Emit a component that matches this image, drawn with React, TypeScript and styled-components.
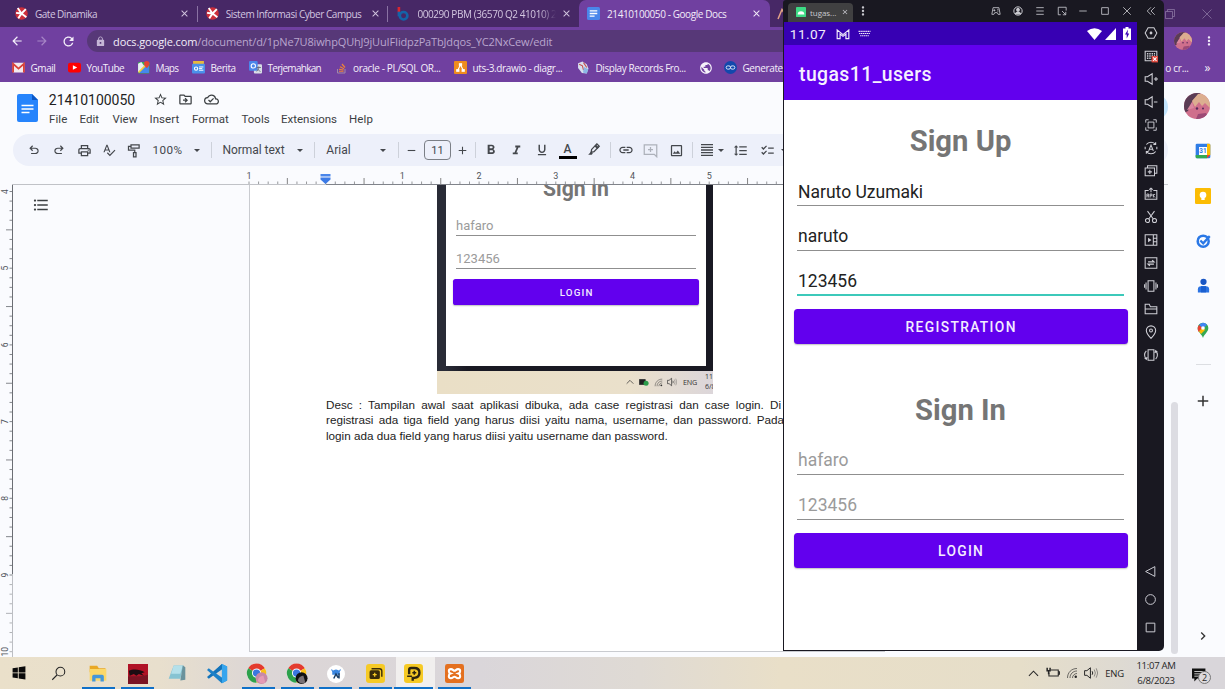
import React from 'react';
import styled, { createGlobalStyle, css } from 'styled-components';
import {
  MdOutlinePrint, MdSpellcheck, MdRemove, MdAdd, MdFormatBold, MdFormatItalic, MdFormatUnderlined,
  MdLink, MdOutlineImage, MdFormatAlignJustify, MdFormatLineSpacing, MdChecklist,
  MdStarBorder, MdOutlineDriveFileMove, MdOutlineCloudDone, MdFormatListBulleted, MdLock, MdPublic,
  MdArrowBack, MdArrowForward, MdRefresh, MdMoreVert, MdClose, MdChevronRight,
} from 'react-icons/md';

const Global = createGlobalStyle`
  * { box-sizing: border-box; }
  body { margin: 0; overflow: hidden; background: #f9fafe; }
`;

const ui = '"Open Sans", "Noto Sans", sans-serif';
const roboto = 'Roboto, "Liberation Sans", sans-serif';

const Desktop = styled.div`
  position: relative;
  display: flex;
  flex-direction: column;
  width: 1225px;
  height: 689px;
  overflow: hidden;
  font-family: ${ui};
`;

/* ---------- shared bits ---------- */

const Text = styled.span<{ $size?: number; $ls?: number; $color?: string; $weight?: number }>`
  font-size: ${p => p.$size ?? 10}px;
  letter-spacing: ${p => p.$ls ?? 0}px;
  color: ${p => p.$color ?? 'inherit'};
  font-weight: ${p => p.$weight ?? 400};
  white-space: nowrap;
`;

const Slot = styled.span<{ $w: number; $h?: number }>`
  display: flex;
  flex: none;
  align-items: center;
  justify-content: center;
  width: ${p => p.$w}px;
  ${p => p.$h && css`height: ${p.$h}px;`}
  white-space: nowrap;
  svg { flex: none; display: block; }
`;

const Spacer = styled.span`flex: 1;`;

type DrawProps = { s?: number; vb?: string; w?: number; children: React.ReactNode };
const Draw = ({ s = 14, vb = '0 0 24 24', children }: DrawProps) => (
  <svg width={s} height={s} viewBox={vb}>{children}</svg>
);
const Line = ({ s = 14, w = 1.8, vb = '0 0 24 24', children }: DrawProps) => (
  <svg width={s} height={s} viewBox={vb} fill="none" stroke="currentColor" strokeWidth={w}>{children}</svg>
);

/* ---------- browser ---------- */

const Browser = styled.main`
  display: flex;
  flex-direction: column;
  height: 657px;
  background: #fafbfe;
`;

const TabStrip = styled.div`
  display: flex;
  height: 27px;
  padding-left: 7px;
  background: #472866;
  color: #d9cde6;
`;

const TabBox = styled.div<{ $active?: boolean; $divider?: boolean }>`
  display: flex;
  flex: none;
  align-items: center;
  width: 190.7px;
  height: 27px;
  padding-left: 8px;
  position: relative;
  border-radius: 7px 7px 0 0;
  background: ${p => (p.$active ? '#7040a0' : 'transparent')};
  color: ${p => (p.$active ? '#f3edf9' : '#d3c6e0')};
  ${p => p.$divider && css`
    &::after { content: ''; position: absolute; right: 0; top: 6px; width: 1px; height: 16px; background: #8a72a3; }
  `}
`;

const TabTitle = styled.span<{ $ls: number; $fade?: boolean }>`
  flex: 1;
  margin-left: 7px;
  margin-right: -3px;
  overflow: hidden;
  font-size: 10px;
  letter-spacing: ${p => p.$ls}px;
  white-space: nowrap;
  ${p => p.$fade && css`mask-image: linear-gradient(90deg, #000 88%, transparent);`}
`;

const AddressBar = styled.div`
  display: flex;
  align-items: center;
  height: 29px;
  padding: 0 0 1px 5px;
  background: #7040a0;
  color: #f4effa;
`;

const Omnibox = styled.div`
  display: flex;
  align-items: center;
  width: 1000px;
  height: 22px;
  margin-left: 5px;
  padding-left: 7px;
  border-radius: 11px;
  background: #573878;
`;

const Bookmarks = styled.div`
  display: flex;
  align-items: center;
  height: 26px;
  padding: 0 0 3px 12px;
  background: #7040a0;
  color: #f4effa;
`;

const BookmarkItem = styled.div<{ $w: number }>`
  display: flex;
  flex: none;
  align-items: center;
  gap: 5.5px;
  width: ${p => p.$w}px;
  svg { flex: none; display: block; }
`;

/* Face used for the profile pictures */
const Avatar = ({ s }: { s: number }) => (
  <svg width={s} height={s} viewBox="0 0 26 26">
    <defs><clipPath id={`face${s}`}><circle cx="13" cy="13" r="13" /></clipPath></defs>
    <g clipPath={`url(#face${s})`}>
      <rect width="26" height="26" fill="#cf6f8c" />
      <path d="M0 0h17L9 7 4 18 0 20z" fill="#5a3c55" />
      <path d="M8 8L14 1l12-1v15l-5-5-3 3-3-4-4 5z" fill="#dcae90" />
      <path d="M3 17l5-8 2 6z" fill="#dc87a0" />
      <circle cx="13" cy="15.500" r="1.200" fill="#582a5a" /><circle cx="19" cy="15.500" r="1" fill="#582a5a" />
      <path d="M12 26l2-5 8-1 4 6z" fill="#9c4a76" />
    </g>
  </svg>
);

const Dinamika = () => (
  <Draw s={13}>
    <circle cx="12" cy="12" r="11.5" fill="#cc2f3b" />
    <path d="M12 12L5 2M12 12L2 11M12 12L6 21M12 12l8-8M12 12l9 7" stroke="#fff" strokeWidth="3.4" />
    <circle cx="12" cy="12" r="3" fill="#fff" />
  </Draw>
);
const DocsFav = () => (
  <Draw s={13}>
    <rect width="24" height="24" rx="3" fill="#4a86ea" />
    <path d="M5 7h14M5 12h14M5 17h9" stroke="#fff" strokeWidth="2.4" />
  </Draw>
);
const BlueB = () => (
  <Draw s={14}>
    <path d="M5 0v9" stroke="#d9262f" strokeWidth="4.500" />
    <path d="M5 8v8" stroke="#1464a8" strokeWidth="4.500" />
    <circle cx="13" cy="15" r="6.500" fill="none" stroke="#1464a8" strokeWidth="4.500" />
  </Draw>
);

const tabs = [
  { icon: <Dinamika />, title: 'Gate Dinamika', ls: -0.5, divider: true },
  { icon: <Dinamika />, title: 'Sistem Informasi Cyber Campus', ls: -0.45, divider: true },
  { icon: <BlueB />, title: '000290 PBM (36570 Q2 41010) 2', ls: -0.42, fade: true },
  { icon: <DocsFav />, title: '21410100050 - Google Docs', ls: -0.41, active: true },
];

const bookmarks = [
  { w: 56, label: 'Gmail', ls: -0.45, icon: (
    <Draw s={13}><rect x="1" y="3" width="22" height="18" rx="2" fill="#f3e9ee" /><path d="M2 21V5l10 9 10-9v16" fill="none" stroke="#d9433a" strokeWidth="3.4" /></Draw>) },
  { w: 69, label: 'YouTube', ls: -0.5, icon: (
    <Draw s={13}><rect y="3" width="24" height="18" rx="4" fill="#f00" /><path d="M9 8l8 4-8 4z" fill="#fff" /></Draw>) },
  { w: 55, label: 'Maps', ls: -0.6, icon: (
    <Draw s={13}><rect x="2" y="2" width="21" height="21" rx="2" fill="#3aa757" /><path d="M2 5v16L14 10 8 2z" fill="#e9eef2" /><path d="M4 22L22 3v19z" fill="#4587ee" /><path d="M3 21L20 4" stroke="#f6c945" strokeWidth="3" /><path d="M18 0a5 5 0 015 5c0 4-5 8-5 8s-5-4-5-8a5 5 0 015-5" fill="#e14334" /></Draw>) },
  { w: 57, label: 'Berita', ls: -0.45, icon: (
    <Draw s={13}><rect x="2" y="0" width="20" height="8" fill="#e8b93c" /><rect y="5" width="24" height="18" rx="2" fill="#4a90ea" /><circle cx="7.5" cy="14" r="3" fill="none" stroke="#fff" strokeWidth="2" /><path d="M13 11h8M13 14h6M13 17h8" stroke="#fff" strokeWidth="1.8" /></Draw>) },
  { w: 86.5, label: 'Terjemahkan', ls: -0.7, icon: (
    <Draw s={13}><rect x="9" y="6" width="15" height="17" rx="2" fill="#d8dde6" /><rect width="16" height="18" rx="2" fill="#4a86ea" /><circle cx="8" cy="9" r="4" fill="none" stroke="#fff" strokeWidth="2" /><path d="M14 12h8M18 10v2c0 3-2 6-4 7M15 14l6 6" stroke="#667" strokeWidth="1.6" fill="none" /></Draw>) },
  { w: 118.5, label: 'oracle - PL/SQL OR...', ls: -0.35, icon: (
    <Draw s={12}><path d="M3 14v8h15v-8" fill="none" stroke="#a08aa8" strokeWidth="2" /><path d="M6 18.500h9M6 14.500l9 1.500M8 9.500l8 4M12 4l6 7" stroke="#ef8236" strokeWidth="2.4" /></Draw>) },
  { w: 123, label: 'uts-3.drawio - diagr...', ls: -0.36, icon: (
    <Draw s={13}><rect width="24" height="24" rx="2" fill="#ee8c1e" /><path d="M12 7L7 17M12 7l5 10" stroke="#fff" strokeWidth="2" /><rect x="9" y="4" width="6" height="5" fill="#fff" /><rect x="4" y="15" width="6" height="5" fill="#fff" /><rect x="14" y="15" width="6" height="5" fill="#fff" /></Draw>) },
  { w: 122, label: 'Display Records Fro...', ls: -0.43, icon: (
    <Draw s={13}><path d="M2 4l8-3 8 5 3 8-3 9-9-1-7-9z" fill="#d7dfee" /><path d="M4 6l6 3 2 8M12 3l6 9" stroke="#c2504e" strokeWidth="2" fill="none" /><path d="M13 11l8 4-3 8-7-2z" fill="#8bb7e6" /></Draw>) },
  { w: 25, label: '', ls: 0, icon: <MdPublic size={14} color="#f6f2fa" /> },
  { w: 80, label: 'Generate', ls: -0.4, icon: (
    <Draw s={13}><circle cx="12" cy="12" r="12" fill="#1248ac" /><rect x="4" y="9" width="8" height="6" rx="3" fill="none" stroke="#dce6fa" strokeWidth="1.8" /><rect x="12" y="9" width="8" height="6" rx="3" fill="none" stroke="#dce6fa" strokeWidth="1.8" /></Draw>) },
];

/* ---------- document editor ---------- */

const DocHeader = styled.header`
  display: flex;
  height: 52px;
  padding-left: 17px;
  background: #fafbfe;
  font-family: ${roboto};
  color: #3c4043;
`;
const DocLogo = styled.div`width: 32px; padding-top: 12px; svg { display: block; }`;
const DocTitles = styled.div`display: flex; flex-direction: column; flex: 1;`;
const TitleRow = styled.div`display: flex; align-items: center; height: 25px; padding-top: 10px;`;
const MenuRow = styled.nav`display: flex; align-items: center; height: 22px; padding-top: 1px;`;
const MenuItem = styled.span<{ $w: number; $ls: number }>`
  flex: none;
  width: ${p => p.$w}px;
  font-size: 11.5px;
  letter-spacing: ${p => p.$ls}px;
  white-space: nowrap;
`;
const ShareEdge = styled.div`
  width: 40px; height: 26px; margin-top: 12px; margin-right: 16px; border-radius: 13px; background: #c2e4fd;
`;
const HeaderAvatar = styled.div`width: 41px; padding-top: 11px;`;

const DocBody = styled.div`display: flex; height: 523px;`;
const DocMain = styled.div`display: flex; flex-direction: column; width: 1180px;`;

const Toolbar = styled.div`
  display: flex;
  align-items: center;
  width: 1155px;
  height: 32px;
  margin-left: 13px;
  padding-left: 8px;
  border-radius: 16px;
  background: #edf0fa;
  font-family: ${roboto};
  color: #44474c;
`;
const Divider = styled.i`width: 1px; height: 16px; background: #cdd1da;`;
const Caret = styled.i`
  border: 3.5px solid transparent;
  border-top-color: #44474c;
  border-bottom: 0;
`;
const SizeBox = styled.span`
  display: flex;
  flex: none;
  align-items: center;
  justify-content: center;
  width: 27px;
  height: 20px;
  margin: 0 2px 0 7px;
  border: 1px solid #7b7f86;
  border-radius: 4px;
  font-size: 11px;
`;
const ColorLetter = styled.span`
  display: flex;
  flex-direction: column;
  align-items: center;
  width: 18px;
  border-bottom: 3px solid #000;
  font-size: 12px;
  font-weight: 500;
  line-height: 14px;
`;

const RulerRow = styled.div`height: 19px; svg { display: block; }`;
const Workspace = styled.div`display: flex; height: 472px;`;
const SideRuler = styled.div`width: 13px; svg { display: block; }`;
const Outline = styled.div`width: 236px; padding: 11px 0 0 19px; color: #3c4043; svg { display: block; }`;
const Page = styled.article`
  width: 636px;
  height: 467px;
  border: 1px solid #c9cbd0;
  border-top: 0;
  background: #fff;
`;
const ScrollTrack = styled.div`
  flex: 1;
  display: flex;
  justify-content: flex-end;
  padding: 217px 2px 0 0;
`;
const Thumb = styled.div`width: 7px; height: 252px; border-radius: 4px; background: #dcdce2;`;

const Paragraph = styled.div`
  margin: 3px 0 0 76px;
  font-family: "Liberation Sans", Arial, sans-serif;
  font-size: 11.7px;
  line-height: 15.4px;
  color: #1c1c1c;
`;
const JustLine = styled.div<{ $w: number; $last?: boolean }>`
  width: ${p => p.$w}px;
  white-space: nowrap;
  text-align: justify;
  text-align-last: ${p => (p.$last ? 'left' : 'justify')};
`;

const SidePanel = styled.aside`
  display: flex;
  flex-direction: column;
  align-items: center;
  width: 45px;
  margin-top: -5px;
  padding-left: 1px;
  color: #333;
`;
const PanelRule = styled.i`width: 15px; height: 1px; margin: 12px 0 13px; background: #dcdee2;`;

/* Screenshot inserted in the page */
const Shot = styled.figure`
  display: flex;
  flex-direction: column;
  width: 276px;
  height: 209px;
  margin: 0 0 0 187px;
  overflow: hidden;
`;
const ShotPhone = styled.div`
  display: flex;
  flex-direction: column;
  height: 185.5px;
  padding: 0 7px 5px 9px;
  background: linear-gradient(90deg, #292b36 9px, #191923 30px);
`;
const ShotScreen = styled.div`
  display: flex;
  flex-direction: column;
  align-items: center;
  height: 180.5px;
  background: #fff;
  font-family: ${roboto};
`;
const ShotBar = styled.div`
  display: flex;
  align-items: center;
  flex: 1;
  background: linear-gradient(90deg, #eadfc6, #eae0cb 70%, #dcd6da);
  color: #333;
`;
const ShotClock = styled.div`
  width: 8px; overflow: hidden; font-size: 7px; line-height: 10.500px; white-space: nowrap;
`;

const undoPath = 'M280-200v-80h284q63 0 109.500-40T720-420q0-60-46.500-100T564-560H312l104 104-56 56-200-200 200-200 56 56-104 104h252q97 0 166.500 63T800-420q0 94-69.500 157T564-200H280Z';

const INCH = 76.7;

const TopRuler = () => {
  const ticks = [];
  for (let i = -8; i <= 64; i++) {
    const x = 325.7 + (i * INCH) / 8;
    const half = i % 4 === 0 && i % 8 !== 0;
    ticks.push(<path key={i} d={`M${x} ${half ? 12 : 15.500}V18`} stroke={half ? '#777' : '#8b8d91'} strokeWidth="0.9" />);
  }
  return (
    <svg width="1180" height="19">
      <path d="M12 18.500H326" stroke="#c0c2c7" />
      <path d="M326 18.500H803" stroke="#80838a" />
      <path d="M803 18.500H1168" stroke="#c8cacf" />
      {ticks}
      {[-1, 1, 2, 3, 4, 5].map(n => (
        <text key={n} x={325.7 + n * INCH} y={13} textAnchor="middle" fontSize="9" fontFamily="Roboto" fill="#50545a">{Math.abs(n)}</text>
      ))}
      <path d="M320.500 8h10v2.500h-10z" fill="#4a86ea" />
      <path d="M320.500 11.500h10v2l-5 4.500-5-4.500z" fill="#3c7be6" />
    </svg>
  );
};

const LeftRuler = () => {
  const ticks = [];
  for (let i = 0; i <= 48; i++) {
    const y = 6.5 + (i * INCH) / 8;
    const half = i % 8 === 4;
    ticks.push(<path key={i} d={`M${half ? 6 : 9.500} ${y}H12`} stroke={y > 390 ? '#a8aaae' : '#777a80'} strokeWidth="0.9" />);
  }
  return (
    <svg width="13" height="472">
      <path d="M12.500 0V389" stroke="#6b6e74" />
      <path d="M12.500 389V472" stroke="#bcbec3" />
      {ticks}
      {[4, 5, 6, 7, 8, 9, 10].map(n => {
        const y = 6.5 + (n - 4) * INCH;
        return (
          <text key={n} transform={`translate(7.500 ${y}) rotate(-90)`} textAnchor="middle" fontSize="8.500" fontFamily="Roboto" fill="#50545a">{n}</text>
        );
      })}
    </svg>
  );
};

/* ---------- form shared by the phone screens ---------- */

const FormTitle = styled.h2<{ $size: number; $top: number; $h: number }>`
  display: flex;
  flex: none;
  align-items: center;
  justify-content: center;
  height: ${p => p.$h}px;
  margin: ${p => p.$top}px 0 0;
  font-size: ${p => p.$size}px;
  font-weight: 700;
  color: #757575;
`;
const Field = styled.div<{ $w: number; $h: number; $size: number; $pad: number; $hint?: boolean; $focus?: boolean }>`
  display: flex;
  flex: none;
  align-items: flex-end;
  width: ${p => p.$w}px;
  height: ${p => p.$h}px;
  padding: 0 0 ${p => p.$pad}px ${p => (p.$size > 15 ? 1 : 0)}px;
  border-bottom: ${p => (p.$focus ? '2px solid #3cc9ba' : '1px solid #8f8f8f')};
  font-size: ${p => p.$size}px;
  line-height: ${p => p.$size * 1.16}px;
  color: ${p => (p.$hint ? '#9b9b9b' : '#222')};
`;
const FormButton = styled.button<{ $w: number; $h: number; $top: number; $size: number; $ls: number }>`
  flex: none;
  width: ${p => p.$w}px;
  height: ${p => p.$h}px;
  margin: ${p => p.$top}px 0 0;
  padding: 0 0 0 ${p => p.$ls}px;
  border: 0;
  border-radius: ${p => p.$h / 10}px;
  background: #6200ee;
  box-shadow: 0 1px 1.500px rgba(0, 0, 0, 0.25);
  color: #f4ecff;
  font: 500 ${p => p.$size}px ${roboto};
  letter-spacing: ${p => p.$ls}px;
`;

/* ---------- emulator window ---------- */

const Emulator = styled.section`
  position: absolute;
  left: 783px;
  top: 0;
  display: flex;
  flex-direction: column;
  width: 381px;
  height: 651px;
  overflow: hidden;
  border-radius: 3px 5px 5px 0;
  background: #191821;
`;
const TitleBar = styled.div`
  display: flex;
  align-items: center;
  height: 22px;
  padding-left: 5px;
  color: #c9c9cf;
`;
const AppTab = styled.div`
  display: flex;
  align-items: center;
  gap: 4px;
  width: 65px;
  height: 19px;
  margin-top: 2px;
  padding-left: 8px;
  border-radius: 4px 4px 0 0;
  background: #404041;
`;
const EmuRow = styled.div`display: flex; height: 628px; padding-left: 1px;`;
const Phone = styled.div`
  display: flex;
  flex-direction: column;
  width: 353px;
  background: #fff;
  font-family: ${roboto};
`;
const StatusBar = styled.div`
  display: flex;
  align-items: center;
  height: 23px;
  padding-left: 6px;
  background: #3700b3;
  color: #f1ebfb;
`;
const AppBar = styled.div`
  display: flex;
  align-items: center;
  height: 55px;
  padding: 3px 0 0 15px;
  background: #6200ee;
  color: #f6f0ff;
`;
const Form = styled.div`display: flex; flex-direction: column; align-items: center;`;
const Controls = styled.div`
  display: flex;
  flex-direction: column;
  align-items: center;
  width: 27px;
  margin-top: -1px;
  color: #cfcfd6;
`;

const controlIcons: React.ReactNode[] = [
  <Line><path d="M7 3h10l5 9-5 9H7l-5-9z" /><circle cx="12" cy="12" r="1.500" fill="currentColor" /></Line>,
  <Line><path d="M2 4h20v16H2z" /><path d="M5 8h14M5 12h14M5 16h7" strokeDasharray="2.500 1.500" strokeWidth="2.500" /><rect x="13" y="12" width="11" height="11" fill="#e04a3e" stroke="none" /><path d="M15.500 14.500l6 6M21.500 14.500l-6 6" stroke="#fff" /></Line>,
  <Line><path d="M2 8h4l8-5v18l-8-5H2zM17 12h7M20.500 8.500v7" /></Line>,
  <Line><path d="M2 8h4l8-5v18l-8-5H2zM17 12h6" /></Line>,
  <Line w={1.6}><path d="M3 8V3h5M16 3h5v5M21 16v5h-5M8 21H3v-5M7 7h10v10H7z" /></Line>,
  <Line><path d="M4 6a10 10 0 0116 0M20 18a10 10 0 01-16 0M20 2v4h-4M4 22v-4h4M2 10v4M22 10v4" /><path d="M8 17l4-10 4 10M9.500 14h5" /></Line>,
  <Line><path d="M6 7V3h16v13h-4M2 7h16v13H2zM10 10v7M6.500 13.500h7" /></Line>,
  <Line><path d="M8 6H2v15h20V6h-6M12 9V2M9 4.500L12 2l3 2.500" /><path d="M5 18v-6h3v6M5 15h3M10.500 18v-6h3v3h-3M16 12v6M19 12l-3 3 3 3" strokeWidth="1.500" /></Line>,
  <Line><circle cx="6" cy="18" r="3.500" /><circle cx="18" cy="18" r="3.500" /><path d="M8 15.500L18 2M16 15.500L6 2" /></Line>,
  <Line><path d="M2 3h20v18H2zM16 3v18M16 9h6M16 15h6" /><path d="M7 8v8l6-4z" fill="currentColor" stroke="none" /></Line>,
  <Line><path d="M2 3h20v18H2z" /><path d="M7 10h10l-3-3M17 14H7l3 3" strokeWidth="2.200" /></Line>,
  <Line><path d="M7 3h10v18H7zM3.500 6v12M20.500 6v12M1 9v6M23 9v6" /></Line>,
  <Line><path d="M2 20V4h7l2 4h11v12zM2 12h20" /></Line>,
  <Line><path d="M12 23S4 15 4 9.500a8 8 0 0116 0C20 15 12 23 12 23z" /><circle cx="12" cy="9.500" r="2.500" /></Line>,
  <Line><path d="M7 3h10v18H7zM4 5c-4 4-4 10 0 14M20 5c4 4 4 10 0 14M1 17l3 2.500 1-4M23 7l-3-2.500-1 4" /></Line>,
];

/* ---------- taskbar ---------- */

const Taskbar = styled.footer`
  display: flex;
  height: 32px;
  background: linear-gradient(90deg, #eae0ca 0, #e8dfcd 160px, #dcd6d6 260px, #dad6da 480px, #dfdad4 640px, #e9dfc8 780px, #e6dec9 1020px, #dedad2 1120px, #d9d6da 1180px);
  color: #262626;
`;
const TaskItem = styled.div<{ $w: number; $run?: boolean; $active?: boolean }>`
  display: flex;
  flex: none;
  align-items: center;
  justify-content: center;
  width: ${p => p.$w}px;
  height: 32px;
  padding-top: ${p => (p.$run ? 1 : 0)}px;
  background: ${p => (p.$active ? '#f1efee' : 'transparent')};
  ${p => p.$run && css`
    &::after {
      content: '';
      align-self: flex-end;
      width: ${p.$active ? 39 : 33}px;
      height: 2px;
      margin-left: -${p.$active ? 29.5 : 26.500}px;
      margin-right: -6.5px;
      background: #0f70c8;
    }
  `}
  svg { flex: none; display: block; }
`;
const Clock = styled.div`
  width: 60px;
  margin-left: -3px;
  font-size: 9.6px;
  letter-spacing: -0.3px;
  line-height: 14.500px;
  padding-top: 2px;
  text-align: center;
`;

const Chrome = ({ face, hair }: { face: string; hair: string }) => (
  <Draw s={22}>
    <circle cx="11.500" cy="11" r="10.500" fill="#fff" />
    <path d="M11.500 11L2.400 5.750A10.500 10.500 0 0120.600 5.750z" fill="#e33b2e" />
    <path d="M11.500 11L20.600 5.750A10.500 10.500 0 0111.500 21.500z" fill="#fbc116" />
    <path d="M11.500 11V21.500A10.500 10.500 0 012.400 5.750z" fill="#2da14c" />
    <circle cx="11.500" cy="11" r="5" fill="#fff" /><circle cx="11.500" cy="11" r="4" fill="#3b78e0" />
    <circle cx="17" cy="16.500" r="6.500" fill={hair} />
    <path d="M13 19c1-4 4-5 6-5l2 7c-2 2-6 2-8-2z" fill={face} />
  </Draw>
);

const taskItems: { w: number; run?: boolean; active?: boolean; icon: React.ReactNode }[] = [
  { w: 38, icon: <Draw s={14}><path d="M1 4l9-1.500V11H1zM11.500 2.200L23 .5V11H11.500zM1 12.500h9V21l-9-1.300zM11.500 12.500H23V23l-11.500-1.700z" fill="#0a0a0a" /></Draw> },
  { w: 40, icon: <Line s={15} w={1.7}><circle cx="15" cy="9" r="7" /><path d="M10 14l-8 8" /></Line> },
  { w: 40, run: true, icon: <Draw s={20}><path d="M2 2h9l2 3h8v5H2z" fill="#e9a825" /><path d="M2 6h20v14H2z" fill="#fbd869" /><path d="M5 21v-6q0-2 2-2h10q2 0 2 2v6h-4v-4H9v4z" fill="#4597d8" /></Draw> },
  { w: 39.5, run: true, icon: <Draw s={20}><rect width="24" height="24" fill="#b01226" /><path d="M0 15c8-1 14 1 24-2v11H0z" fill="#7a1424" /><path d="M1 8c5-2 13-2 19 2l-4 1 3 3-6-2-3 2-3-2-5 2z" fill="#1c0c12" /></Draw> },
  { w: 39.5, icon: <Draw s={20}><path d="M8 3h12l-4 16H2z" fill="#86c3d2" /><path d="M8 3h11l-3 10H5z" fill="#b4e0ea" /><path d="M19 3l3 2v15l-6 1z" fill="#6a929c" /></Draw> },
  { w: 40, icon: <Draw s={21}><path d="M17 1l6 3v16l-6 3L6 12.500z" fill="#2489ca" /><path d="M17 1v22l6-3V4z" fill="#36a5ee" /><path d="M17 7L2 18l-2-2L17 1z" fill="#1373ba" /><path d="M17 17L2 6 0 8l17 15z" fill="#1c80c8" /><path d="M17 7.500v9L10.500 12z" fill="#dcd8d4" /></Draw> },
  { w: 40, run: true, icon: <Chrome face="#e49ab5" hair="#c889a8" /> },
  { w: 39.5, run: true, icon: <Chrome face="#777074" hair="#101012" /> },
  { w: 39.5, run: true, icon: <Draw s={18}><circle cx="12" cy="12" r="12" fill="#fff" /><path d="M7 8q5-4 10 0v5H7z" fill="#3a86e0" /><path d="M8 9l-2-3M16 9l2-3" stroke="#3a86e0" strokeWidth="1.500" /><path d="M9 18l3-6 3 5M16 11v7" stroke="#173d66" strokeWidth="2" fill="none" /></Draw> },
  { w: 39.5, run: true, icon: <Draw s={19}><rect width="24" height="24" rx="4" fill="#f6ca25" /><rect x="4.500" y="8" width="13" height="11" rx="2" fill="#3a2c08" /><path d="M7 6h10q3 0 3 3v7" stroke="#3a2c08" strokeWidth="1.800" fill="none" /><path d="M11 11v5M8.500 13.500h5" stroke="#f6ca25" strokeWidth="1.600" /></Draw> },
  { w: 39.5, run: true, active: true, icon: <Draw s={19}><rect width="24" height="24" rx="4" fill="#f6ca25" /><path d="M6.500 13V7.500Q6.500 5 9 5h4q6.500 0 6.500 6T13 17.500h-2V21" stroke="#2c2410" strokeWidth="3" fill="none" /><path d="M13 8.500v5M10.500 11h5M4 15.500h6" stroke="#2c2410" strokeWidth="2" /></Draw> },
  { w: 39.5, run: true, icon: <Draw s={19}><rect width="24" height="24" rx="3" fill="#e4701f" /><path d="M7.500 6.500C4 6.500 4 11 7 12c-3 1-3 6 .5 6 2.500 0 3-2 4.500-2s2 2 4.500 2c3.500 0 3.500-5 .5-6 3-1 3-5.500-.5-5.500-2.500 0-3 2-4.500 2s-2-2-4.500-2z" fill="none" stroke="#fff" strokeWidth="2.600" /></Draw> },
];

const Wifi = ({ s = 12 }: { s?: number }) => (
  <Line s={s} w={1.6}><path d="M3 22C3 11 11 3 22 3M8 22c0-8 6-14 14-14M13 22c0-5 4-9 9-9" opacity=".8" /><circle cx="19.500" cy="19.500" r="2.500" fill="currentColor" stroke="none" /></Line>
);
const Volume = ({ s = 13 }: { s?: number }) => (
  <Line s={s} w={1.7}><path d="M1 8h4l6-5v18l-6-5H1z" /><path d="M14 9q2 3 0 6" /><path d="M17.500 6q4 6 0 12M21 4q5 8 0 16" opacity=".45" /></Line>
);
const Up = ({ s = 11 }: { s?: number }) => <Line s={s} w={2.2}><path d="M2 17L12 7l10 10" /></Line>;

const Badge = styled.span`
  position: absolute;
  left: 6px;
  top: 6px;
  width: 13px;
  height: 13px;
  border: 1px solid #777;
  border-radius: 50%;
  background: #dcd9dc;
  font-size: 9px;
  line-height: 11px;
  text-align: center;
`;
const Notice = styled.div`position: relative; width: 20px; height: 18px; margin: 8px 0 0 6px;`;

export default function App() {
  return (
    <Desktop>
      <Global />
      <Browser>
        <TabStrip>
          {tabs.map(t => (
            <TabBox key={t.title} $active={t.active} $divider={t.divider}>
              {t.icon}
              <TabTitle $ls={t.ls} $fade={t.fade}>{t.title}</TabTitle>
              <Slot $w={26}><MdClose size={11} /></Slot>
            </TabBox>
          ))}
          <Slot $w={24}><Line s={12} w={3}><path d="M4 22L12 3l5 8" stroke="#e2a287" /></Line></Slot>
          <Spacer />
          <Slot $w={36}><Line s={12} w={1.5}><path d="M3 7h14v14H3zM7 7V3h14v14h-4" stroke="#8e7aa5" /></Line></Slot>
          <Slot $w={37}><Line s={12} w={1.5}><path d="M3 3l18 18M21 3L3 21" stroke="#8e7aa5" /></Line></Slot>
        </TabStrip>

        <AddressBar>
          <Slot $w={24}><MdArrowBack size={14} /></Slot>
          <Slot $w={26}><MdArrowForward size={14} color="#a685c6" /></Slot>
          <Slot $w={27}><MdRefresh size={15} /></Slot>
          <Omnibox>
            <Slot $w={13}><MdLock size={11} color="#c5b6d6" /></Slot>
            <Slot $w={6} />
            <Text $size={11} $ls={-0.1} $color="#f3eefa">docs.google.com</Text>
            <Text $size={11} $ls={-0.16} $color="#b9a6ce">/document/d/1pNe7U8iwhpQUhJ9jUuIFIidpzPaTbJdqos_YC2NxCew/edit</Text>
          </Omnibox>
          <Spacer />
          <Slot $w={18}><Avatar s={18} /></Slot>
          <Slot $w={33}><MdMoreVert size={14} /></Slot>
        </AddressBar>

        <Bookmarks>
          {bookmarks.map(b => (
            <BookmarkItem key={b.label} $w={b.w}>
              {b.icon}
              <Text $ls={b.ls}>{b.label}</Text>
            </BookmarkItem>
          ))}
          <Spacer />
          <Slot $w={26}><Text $ls={-0.3}>o cr...</Text></Slot>
          <Slot $w={35}><Text $size={12}>»</Text></Slot>
        </Bookmarks>

        <DocHeader>
          <DocLogo>
            <svg width="21" height="28" viewBox="0 0 21 28">
              <path d="M2 0h13l6 6v20a2 2 0 01-2 2H2a2 2 0 01-2-2V2a2 2 0 012-2z" fill="#2684fc" />
              <path d="M15 0l6 6h-6z" fill="#0b58c7" />
              <path d="M4.500 11.500h12M4.500 15h12M4.500 18.500h8" stroke="#fff" strokeWidth="1.500" />
            </svg>
          </DocLogo>
          <DocTitles>
            <TitleRow>
              <Slot $w={86}><Text $size={14} $ls={-0.02} $color="#1f1f1f">21410100050</Text></Slot>
              <Slot $w={50}><MdStarBorder size={15} /></Slot>
              <Slot $w={1}><MdOutlineDriveFileMove size={15} /></Slot>
              <Slot $w={50}><MdOutlineCloudDone size={15} /></Slot>
            </TitleRow>
            <MenuRow>
              <MenuItem $w={30.5} $ls={0.1}>File</MenuItem>
              <MenuItem $w={33} $ls={0.05}>Edit</MenuItem>
              <MenuItem $w={37} $ls={0}>View</MenuItem>
              <MenuItem $w={42.5} $ls={0.05}>Insert</MenuItem>
              <MenuItem $w={49.5} $ls={0}>Format</MenuItem>
              <MenuItem $w={39.5} $ls={0}>Tools</MenuItem>
              <MenuItem $w={68} $ls={0}>Extensions</MenuItem>
              <MenuItem $w={30} $ls={0.1}>Help</MenuItem>
            </MenuRow>
          </DocTitles>
          <ShareEdge />
          <HeaderAvatar><Avatar s={26} /></HeaderAvatar>
        </DocHeader>

        <DocBody>
          <DocMain>
            <Toolbar>
              <Slot $w={25}><Draw s={14} vb="0 -960 960 960"><path d={undoPath} fill="#44474c" /></Draw></Slot>
              <Slot $w={25}><Draw s={14} vb="0 -960 960 960"><path d={undoPath} fill="#44474c" transform="matrix(-1 0 0 1 960 0)" /></Draw></Slot>
              <Slot $w={26}><MdOutlinePrint size={15} /></Slot>
              <Slot $w={24}><MdSpellcheck size={14} /></Slot>
              <Slot $w={25}><Line s={15} w={2}><path d="M8 3h13v5H8zM8 5.500H4v6h10v4M12 15.500h4V22h-4z" /></Line></Slot>
              <Slot $w={43}><Text $size={11.7} $ls={0.4}>100%</Text></Slot>
              <Slot $w={16}><Caret /></Slot>
              <Slot $w={12}><Divider /></Slot>
              <Slot $w={73}><Text $size={12} $ls={-0.05}>Normal text</Text></Slot>
              <Slot $w={20}><Caret /></Slot>
              <Slot $w={9}><Divider /></Slot>
              <Slot $w={39}><Text $size={12} $ls={0}>Arial</Text></Slot>
              <Slot $w={16} />
              <Slot $w={18}><Caret /></Slot>
              <Slot $w={13}><Divider /></Slot>
              <Slot $w={12}><MdRemove size={13} /></Slot>
              <SizeBox>11</SizeBox>
              <Slot $w={18}><MdAdd size={13} /></Slot>
              <Slot $w={9}><Divider /></Slot>
              <Slot $w={22}><MdFormatBold size={16} /></Slot>
              <Slot $w={28}><MdFormatItalic size={15} /></Slot>
              <Slot $w={23}><MdFormatUnderlined size={14} /></Slot>
              <Slot $w={29}><ColorLetter>A</ColorLetter></Slot>
              <Slot $w={24}><Line s={14} w={2.2}><path d="M8 11L17 1.500l4 4L12 15l-5 1z" /><path d="M14 4l5 5" strokeWidth="4" /><path d="M2 20l5-5 3 3-2 2z" fill="currentColor" stroke="none" /></Line></Slot>
              <Slot $w={9}><Divider /></Slot>
              <Slot $w={22}><MdLink size={16} /></Slot>
              <Slot $w={27}><Line s={15} w={2}><path d="M2 3h20v19l-4-4H2zM12 6.500v8M8 10.500h8" stroke="#adb1ba" /></Line></Slot>
              <Slot $w={25}><MdOutlineImage size={15} /></Slot>
              <Slot $w={7}><Divider /></Slot>
              <Slot $w={22}><MdFormatAlignJustify size={16} /></Slot>
              <Slot $w={5}><Caret /></Slot>
              <Slot $w={35}><MdFormatLineSpacing size={15} /></Slot>
              <Slot $w={18}><MdChecklist size={15} /></Slot>
              <Slot $w={16}><Caret /></Slot>
            </Toolbar>
            <RulerRow><TopRuler /></RulerRow>
            <Workspace>
              <SideRuler><LeftRuler /></SideRuler>
              <Outline><MdFormatListBulleted size={18} /></Outline>
              <Page>
                <Shot>
                  <ShotPhone>
                    <ShotScreen>
                      <FormTitle $size={21.2} $top={-6} $h={19}>Sign In</FormTitle>
                      <Field $w={240} $h={38} $size={13} $pad={1.5} $hint>hafaro</Field>
                      <Field $w={240} $h={33} $size={13} $pad={1.5} $hint>123456</Field>
                      <FormButton as="div" $w={246} $h={26} $top={10} $size={9.8} $ls={1.15}>
                        <Slot $w={245} $h={26}>LOGIN</Slot>
                      </FormButton>
                    </ShotScreen>
                  </ShotPhone>
                  <ShotBar>
                    <Spacer />
                    <Slot $w={15}><Up s={8} /></Slot>
                    <Slot $w={14}><Line s={10} w={2}><path d="M1 6h14v12H1z" fill="#222" /><circle cx="17" cy="15" r="6" fill="#2b9c4a" stroke="none" /></Line></Slot>
                    <Slot $w={14}><Wifi s={9} /></Slot>
                    <Slot $w={14}><Volume s={10} /></Slot>
                    <Slot $w={22}><Text $size={7.2} $ls={-0.2}>ENG</Text></Slot>
                    <Slot $w={4} />
                    <ShotClock>11:07<br />6/8</ShotClock>
                  </ShotBar>
                </Shot>
                <Paragraph>
                  <JustLine $w={455}>Desc : Tampilan awal saat aplikasi dibuka, ada case registrasi dan case login. Di</JustLine>
                  <JustLine $w={458}>registrasi ada tiga field yang harus diisi yaitu nama, username, dan password. Pada</JustLine>
                  <JustLine $w={458} $last>login ada dua field yang harus diisi yaitu username dan password.</JustLine>
                </Paragraph>
              </Page>
              <ScrollTrack><Thumb /></ScrollTrack>
            </Workspace>
          </DocMain>

          <SidePanel>
            <Slot $w={30} $h={44.7}>
              <Draw s={16}><rect x="1" y="1" width="22" height="22" rx="2" fill="#2f7de6" /><path d="M18 1h3a2 2 0 012 2v15h-5z" fill="#fbbc04" /><path d="M1 18h17v5H3a2 2 0 01-2-2z" fill="#34a853" /><path d="M18 18h5l-5 5z" fill="#ea4335" /><rect x="6" y="6" width="12" height="12" fill="#fff" /><text x="12" y="15.500" fontSize="9.500" fontWeight="700" fontFamily="Roboto" textAnchor="middle" fill="#2f7de6">31</text></Draw>
            </Slot>
            <Slot $w={30} $h={44.7}>
              <Draw s={16}><rect x="0" y="0" width="24" height="24" rx="2" fill="#fbbc04" /><circle cx="12" cy="10.500" r="5" fill="#fff" /><path d="M9.500 14h5v4h-5z" fill="#fff" /></Draw>
            </Slot>
            <Slot $w={30} $h={44.7}>
              <Draw s={15}><circle cx="11.500" cy="13" r="8.800" fill="none" stroke="#2a78e6" strokeWidth="4" /><path d="M7 12l4.500 4.500L22 5" fill="none" stroke="#2a78e6" strokeWidth="3.600" /></Draw>
            </Slot>
            <Slot $w={30} $h={44.7}>
              <Draw s={15}><circle cx="12" cy="6" r="5" fill="#1a57c4" /><path d="M3 23v-5q0-5 5-5h8q5 0 5 5v5z" fill="#2b73e2" /><path d="M8 13h8v10H8z" fill="#1a5fd0" /></Draw>
            </Slot>
            <Slot $w={30} $h={44.7}>
              <Draw s={16}><path d="M12 1a8 8 0 018 8c0 6-6 9-8 15C10 18 4 15 4 9a8 8 0 018-8" fill="#34a853" /><path d="M12 1a8 8 0 016 3l-6 6-6-5.500A8 8 0 0112 1" fill="#4285f4" /><path d="M6 4.500L11 9l-5.500 6A9 9 0 014 9a8 8 0 012-4.500" fill="#ea4335" /><path d="M6 14l6-6 3 4-6 6z" fill="#fbbc04" /><circle cx="12" cy="9" r="2.700" fill="#fff" /></Draw>
            </Slot>
            <PanelRule />
            <Slot $w={30} $h={44.7}><MdAdd size={18} /></Slot>
            <Spacer />
            <Slot $w={30} $h={42}><MdChevronRight size={16} /></Slot>
          </SidePanel>
        </DocBody>
      </Browser>

      <Taskbar>
        {taskItems.map((t, i) => (
          <TaskItem key={i} $w={t.w} $run={t.run} $active={t.active}>{t.icon}</TaskItem>
        ))}
        <Spacer />
        <Slot $w={19}><Up /></Slot>
        <Slot $w={19}><Line s={14} w={1.8}><path d="M8 7h13v10H5v-6M21 10h2v4h-2" /><path d="M2 3v5h5V3M4.500 8v6" strokeWidth="2.600" /></Line></Slot>
        <Slot $w={19}><Wifi /></Slot>
        <Slot $w={19}><Volume s={14} /></Slot>
        <Slot $w={29}><Text $size={9.5} $ls={-0.2}>ENG</Text></Slot>
        <Clock>11:07 AM<br />6/8/2023</Clock>
        <Notice>
          <svg width="14" height="14" viewBox="0 0 24 24"><path d="M0 1h23v17H9l-5 5v-5H0z" fill="#111" /><path d="M4 6h15M4 10h15M4 14h9" stroke="#ddd" strokeWidth="1.500" /></svg>
          <Badge>2</Badge>
        </Notice>
        <Slot $w={13} />
      </Taskbar>

      <Emulator>
        <TitleBar>
          <AppTab>
            <Draw s={10}><rect width="24" height="24" rx="2" fill="#3ddb85" /><path d="M4 18a8 8 0 0116 0z" fill="#fff" /></Draw>
            <Text $size={8} $ls={-0.05}>tugas...</Text>
            <Slot $w={9}><MdClose size={8} /></Slot>
          </AppTab>
          <Slot $w={20}><MdMoreVert size={14} /></Slot>
          <Spacer />
          <Slot $w={23}><Line s={10} w={2}><path d="M5 4h14l3 16h-5l-2-4H9l-2 4H2zM8 8v5M5.500 10.500h5M15 8h3M15 12h3" /></Line></Slot>
          <Slot $w={22}><Line s={10} w={2.4}><circle cx="12" cy="12" r="10" /><circle cx="12" cy="9" r="3.500" fill="currentColor" /><path d="M5 19q2-5 7-5t7 5z" fill="currentColor" /></Line></Slot>
          <Slot $w={22}><Line s={10} w={2}><path d="M3 4h18M3 12h18M3 20h18" /></Line></Slot>
          <Slot $w={21}><Line s={10} w={2}><path d="M9 21H3V3h19v8M12 12l9 9M21 14v7h-7" /></Line></Slot>
          <Slot $w={22}><Line s={10} w={2}><path d="M3 12h18" /></Line></Slot>
          <Slot $w={21}><Line s={10} w={2}><path d="M4 4h16v16H4z" /></Line></Slot>
          <Slot $w={23}><Line s={10} w={2}><path d="M3 3l18 18M21 3L3 21" /></Line></Slot>
          <Slot $w={25}><Line s={10} w={2}><path d="M12 3L3 12l9 9M21 3l-9 9 9 9" /></Line></Slot>
          <Slot $w={1} />
        </TitleBar>
        <EmuRow>
          <Phone>
            <StatusBar>
              <Slot $w={36}><Text $size={13.7} $ls={0.4}>11.07</Text></Slot>
              <Slot $w={10} />
              <Slot $w={14}><Line s={14} w={2}><path d="M2 20V5l10 8 10-8v15h-5v-8l-5 4-5-4v8z" /></Line></Slot>
              <Slot $w={8} />
              <Slot $w={12}><Line s={13} w={2}><path d="M1 8h22M2 12h20M4 16h16" strokeDasharray="2.500 1" /></Line></Slot>
              <Spacer />
              <svg width="15" height="12" viewBox="0 0 15 12"><path d="M0 3Q7.500-2.500 15 3L7.500 12z" fill="#fff" /></svg>
              <Slot $w={3} />
              <svg width="11" height="12" viewBox="0 0 11 12"><path d="M11 0v12H0z" fill="#fff" /></svg>
              <Slot $w={7} />
              <svg width="8" height="13" viewBox="0 0 8 13"><path d="M2.500 0h3v1.500H8V13H0V1.500h2.500z" fill="#fff" /><path d="M5 2.500L2 7.500h1.700V11.500L6.200 6.500H4.500z" fill="#3700b3" /></svg>
              <Slot $w={6} />
            </StatusBar>
            <AppBar><Text $size={19.4} $ls={0.42} $weight={500}>tugas11_users</Text></AppBar>
            <Form>
              <FormTitle $size={29.2} $top={21} $h={40}>Sign Up</FormTitle>
              <Field $w={327} $h={45} $size={17.5} $pad={2.6}>Naruto Uzumaki</Field>
              <Field $w={327} $h={45} $size={17.5} $pad={3.6}>naruto</Field>
              <Field $w={327} $h={45} $size={17.5} $pad={3} $focus>123456</Field>
              <FormButton $w={334} $h={35} $top={13} $size={13.8} $ls={1.35}>REGISTRATION</FormButton>
              <FormTitle $size={29.2} $top={46} $h={40}>Sign In</FormTitle>
              <Field $w={327} $h={45} $size={17.5} $pad={3.6} $hint>hafaro</Field>
              <Field $w={327} $h={45} $size={17.5} $pad={3.6} $hint>123456</Field>
              <FormButton $w={334} $h={35} $top={13} $size={13.8} $ls={1.3}>LOGIN</FormButton>
            </Form>
          </Phone>
          <Controls>
            {controlIcons.map((icon, i) => <Slot key={i} $w={27} $h={23}>{icon}</Slot>)}
            <Spacer />
            <Slot $w={27} $h={28}><Line s={13} w={1.8}><path d="M20 3v18L3 12z" /></Line></Slot>
            <Slot $w={27} $h={28}><Line s={13} w={1.8}><circle cx="12" cy="12" r="9" /></Line></Slot>
            <Slot $w={27} $h={28}><Line s={13} w={1.8}><path d="M4 4h16v16H4z" /></Line></Slot>
            <Slot $w={27} $h={9} />
          </Controls>
        </EmuRow>
      </Emulator>
    </Desktop>
  );
}
